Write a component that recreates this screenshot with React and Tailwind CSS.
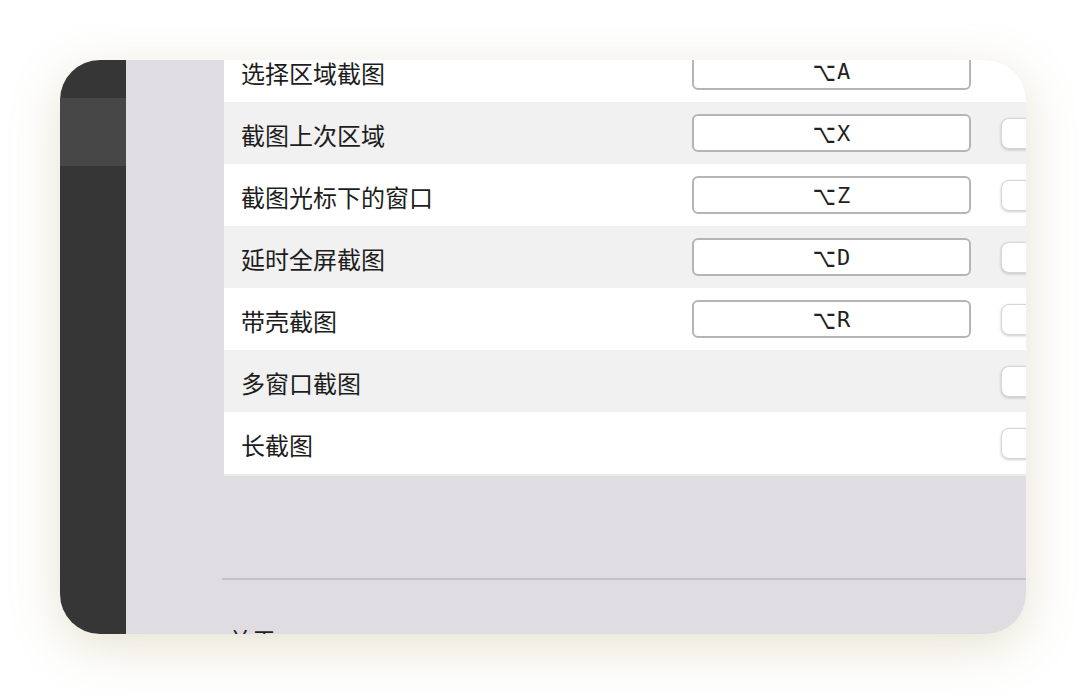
import React from "react";

const rows = [
  { label: "选择区域截图", key: "A", check: false },
  { label: "截图上次区域", key: "X", check: true },
  { label: "截图光标下的窗口", key: "Z", check: true },
  { label: "延时全屏截图", key: "D", check: true },
  { label: "带壳截图", key: "R", check: true },
  { label: "多窗口截图", key: null, check: true },
  { label: "长截图", key: null, check: true },
];

export default function App() {
  return (
    <div className="w-[1086px] h-[694px] bg-white overflow-hidden pt-[60px] pl-[60px]" style={{ fontFamily: '"Noto Sans CJK SC", "Noto Sans", sans-serif' }}>
      <div className="w-[966px] h-[574px] rounded-[40px] overflow-hidden flex shadow-[0_12px_50px_rgba(160,150,90,0.28)]">
        <div className="w-[66px] shrink-0 bg-[#353635] pt-[38px]">
          <div className="h-[68px] bg-[#474747]" />
        </div>
        <div className="flex-1 bg-[#dfdce2] pl-[98px] overflow-hidden">
          <div className="-mt-[20px] w-[900px]">
            <div className="border-b-2 border-[#ececec]">
              {rows.map((r, i) => (
                <div
                  key={r.label}
                  className={`h-[62px] flex items-center pl-[17px] ${i % 2 === 1 ? "bg-[#f0f1f0]" : "bg-white"}`}
                >
                  <div className="w-[451px] text-[24px] text-[#1d1d1d] leading-none pt-[3px]">{r.label}</div>
                  <div className="w-[279px] h-[38px] shrink-0">
                    {r.key && (
                      <div className="w-full h-full rounded-[6px] border-2 border-[#b5b5b5] bg-white flex items-center justify-center text-[22px] text-[#222] pt-[1px]" style={{ fontFamily: '"DejaVu Sans Mono", "Liberation Mono", monospace' }}>
                        <span className="inline-block text-[20px] scale-y-[1.35] mr-[1px]" style={{ fontFamily: '"DejaVu Sans", sans-serif' }}>⌥</span>
                        <span>{r.key}</span>
                      </div>
                    )}
                  </div>
                  {r.check && (
                    <div className="ml-[30px] w-[32px] h-[31px] shrink-0 rounded-[8px] bg-white border border-[#d6d6d6] shadow-[0_1px_3px_rgba(0,0,0,0.2)]" />
                  )}
                </div>
              ))}
            </div>
            <div className="h-[102px]" />
            <div className="-ml-[2px] h-[2px] bg-[#c4c2c8]" />
            <div className="pt-[48px] pl-[4px] text-[24px] text-[#222] leading-none">关于</div>
          </div>
        </div>
      </div>
    </div>
  );
}
